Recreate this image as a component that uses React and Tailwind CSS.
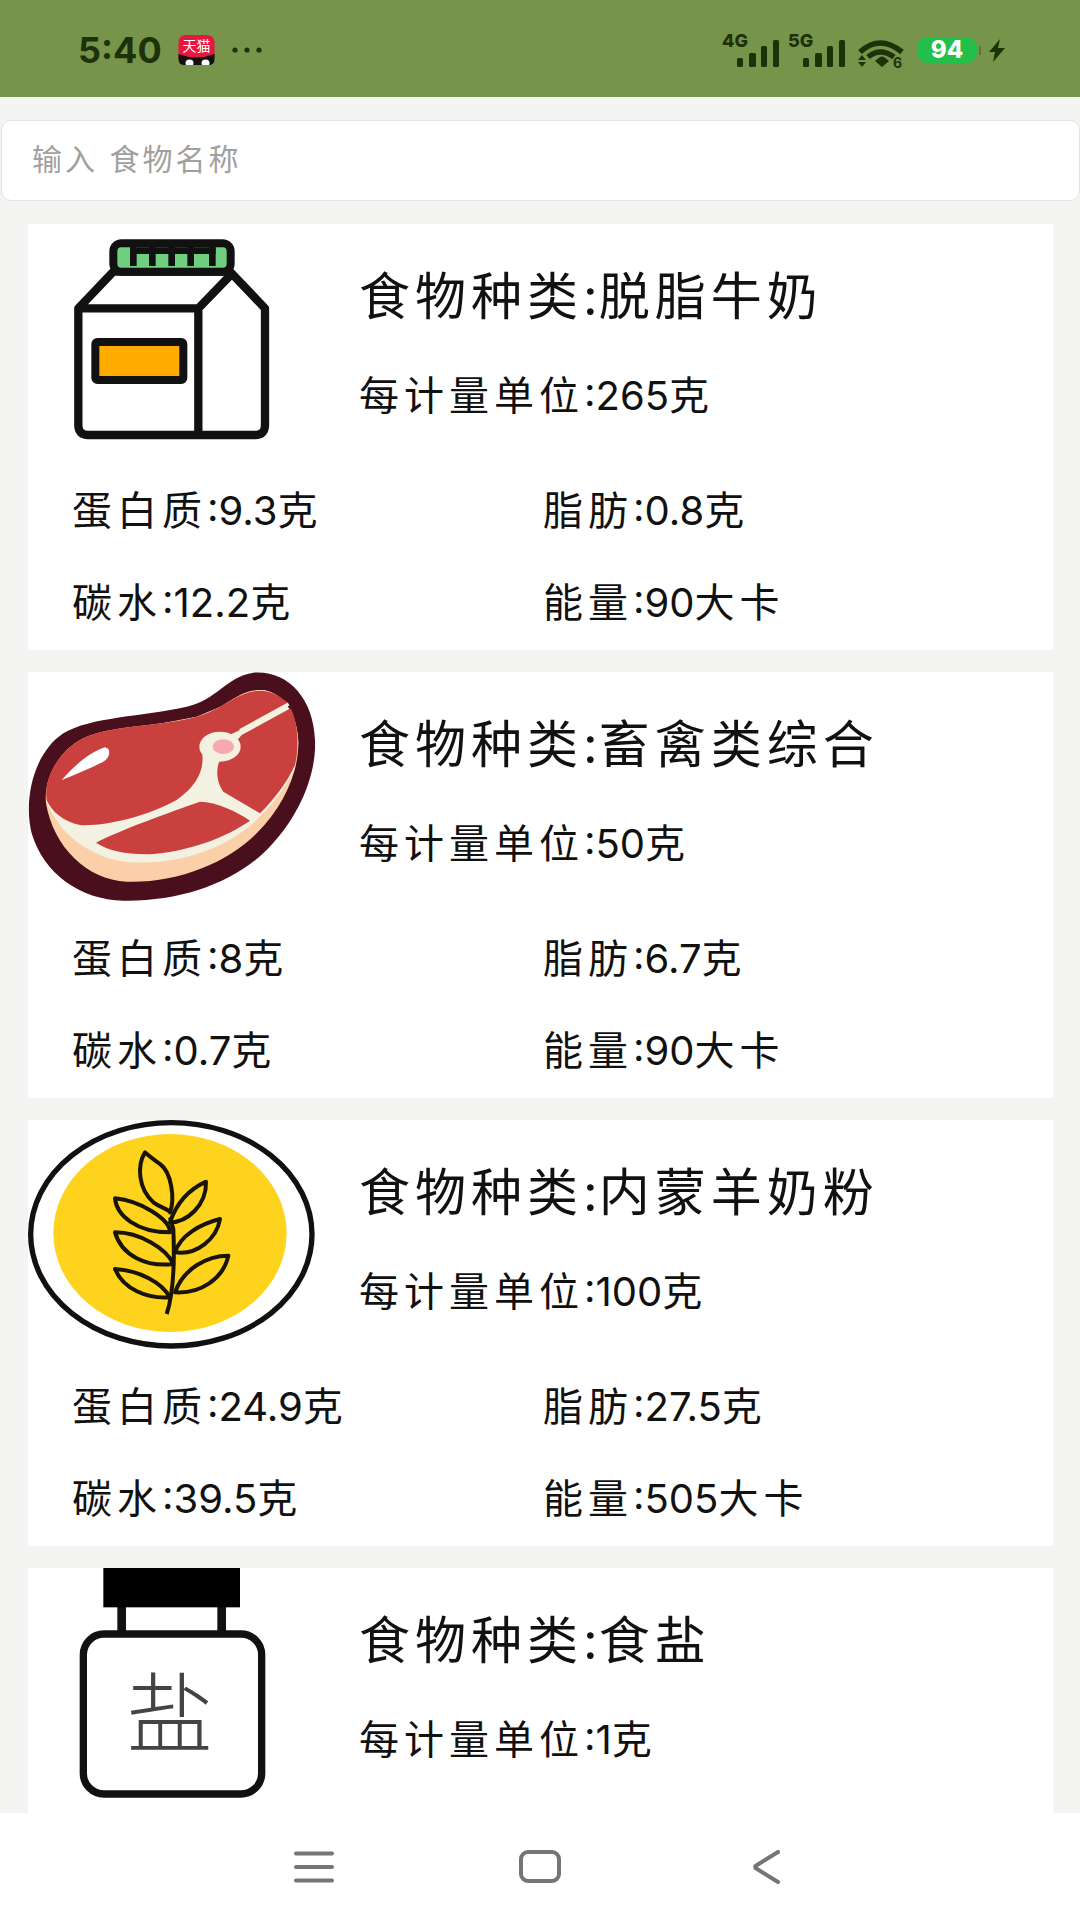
import React from 'react';

const foods = [
  { name: '脱脂牛奶', unit: '265', icon: 'milk', protein: '9.3', fat: '0.8', carbs: '12.2', energy: '90' },
  { name: '畜禽类综合', unit: '50', icon: 'meat', protein: '8', fat: '6.7', carbs: '0.7', energy: '90' },
  { name: '内蒙羊奶粉', unit: '100', icon: 'wheat', protein: '24.9', fat: '27.5', carbs: '39.5', energy: '505' },
  { name: '食盐', unit: '1', icon: 'salt' },
];

function MilkIcon() {
  return (
    <svg viewBox="24 12 861 690" className="w-full h-full">
      <path d="M280 155 L630 155 L735 265 L735 615 Q735 645 705 645 L205 645 Q175 645 175 615 L175 265 Z" fill="#fff" stroke="#111" strokeWidth="25" strokeLinejoin="round" />
      <path d="M175 265 L535 265 L535 645 M535 265 L632 165" fill="none" stroke="#111" strokeWidth="25" />
      <rect x="280" y="70" width="352" height="85" rx="24" fill="#6fcf7f" stroke="#111" strokeWidth="24" />
      <path d="M340 80 V138 M397 80 V138 M455 80 V138 M512 80 V138 M577 80 V138" stroke="#111" strokeWidth="20" />
      <path d="M332 92 H587" stroke="#111" strokeWidth="20" />
      <rect x="226" y="366" width="264" height="114" rx="6" fill="#ffab00" stroke="#111" strokeWidth="24" />
    </svg>
  );
}

function MeatIcon() {
  return (
    <svg viewBox="24 36 861 690" className="w-full h-full">
      <path d="M700 38 C800 30 880 110 885 240 C890 340 840 470 740 570 C640 670 480 725 310 722 C180 720 70 640 35 520 C10 420 40 280 130 220 C210 170 370 170 500 140 C590 120 620 50 700 38 Z" fill="#4a0f1c" />
      <path d="M720 90 C790 90 835 170 835 250 C835 340 790 440 710 520 C620 610 470 670 320 665 C200 660 100 560 78 430 C70 350 120 270 190 235 C270 195 420 200 530 170 C620 145 650 90 720 90 Z" fill="#fbd0a9" />
      <path d="M78 420 C110 510 190 580 300 603 C420 620 560 590 660 520 C730 470 790 400 825 325 L835 250 C835 170 790 90 720 90 L530 170 L190 235 Z" fill="#f3f1e2" />
      <path d="M80 420 C70 350 120 270 190 235 C270 195 420 200 530 170 C610 148 650 95 720 92 C755 92 785 110 805 130 L660 210 L545 265 C555 320 540 370 470 420 C380 470 250 500 180 495 C130 485 95 455 80 420 Z" fill="#c9403f" />
      <path d="M812 145 C835 190 838 260 825 315 C800 370 760 420 720 460 L610 395 C585 360 590 320 600 300 L665 225 Z" fill="#c9403f" />
      <path d="M228 548 C300 510 440 460 540 425 C590 425 650 455 690 482 C620 530 520 570 400 582 C330 585 270 575 228 548 Z" fill="#c9403f" />
      <path d="M660 212 L806 132" stroke="#f3f1e2" strokeWidth="10" />
      <ellipse cx="600" cy="260" rx="62" ry="45" fill="#f3f1e2" />
      <ellipse cx="610" cy="260" rx="32" ry="22" fill="#f7a8b0" />
      <path d="M125 360 C160 320 210 275 255 262 C275 265 270 295 250 305 C210 325 165 345 125 360 Z" fill="#fff" />
    </svg>
  );
}

function WheatIcon() {
  return (
    <svg viewBox="24 33 861 690" className="w-full h-full">
      <ellipse cx="454" cy="376" rx="422" ry="335" fill="#fff" stroke="#111" strokeWidth="16" />
      <ellipse cx="450" cy="372" rx="350" ry="297" fill="#fdd31e" />
      <g fill="none" stroke="#1a1408" strokeWidth="12" strokeLinejoin="round">
        <path d="M440 615 C455 570 465 480 460 360 L450 325" />
        <path d="M375 130 C350 170 355 240 400 280 C420 295 445 300 450 310 C465 270 455 190 420 165 C400 150 385 140 375 130 Z" />
        <path d="M558 218 C510 240 470 280 450 340 C500 340 560 290 558 218 Z" />
        <path d="M285 268 C290 320 350 370 450 370 C450 330 360 275 285 268 Z" />
        <path d="M600 330 C540 345 480 380 465 430 C530 440 590 390 600 330 Z" />
        <path d="M285 370 C305 440 380 475 460 465 C440 420 360 370 285 370 Z" />
        <path d="M625 440 C560 440 490 480 465 550 C540 555 610 510 625 440 Z" />
        <path d="M285 480 C310 540 380 570 450 565 C425 520 360 485 285 480 Z" />
      </g>
    </svg>
  );
}

function SaltIcon() {
  return (
    <svg viewBox="24 57 861 690" className="w-full h-full">
      <path d="M305 170 V255 M605 170 V255" stroke="#111" strokeWidth="26" />
      <rect x="250" y="57" width="410" height="118" fill="#000" />
      <rect x="190" y="255" width="535" height="480" rx="62" fill="#fff" stroke="#111" strokeWidth="22" />
      <text x="450" y="590" textAnchor="middle" fontSize="262" fontWeight="300" fill="#444" fontFamily="'Noto Sans CJK SC', sans-serif">盐</text>
    </svg>
  );
}

const icons = { milk: MilkIcon, meat: MeatIcon, wheat: WheatIcon, salt: SaltIcon };

function Nutrient({ label, value, unit }) {
  return (
    <div className="flex items-center h-[92px] text-[40px]">
      <span className="tracking-[5px]">{label}</span>
      <span>:{value}</span>
      <span className="tracking-[5px]">{unit}</span>
    </div>
  );
}

function FoodCard({ food }) {
  const Icon = icons[food.icon];
  return (
    <div className="h-[426px] shrink-0 bg-white text-[#111]">
      <div className="flex h-[241px]">
        <div className="w-[287px] h-[230px] shrink-0">
          <Icon />
        </div>
        <div className="pl-[44px] pt-[23px]">
          <div className="flex items-center h-[100px] text-[51px]">
            <span className="tracking-[5px]">食物种类</span>
            <span className="tracking-[1px]">:</span>
            <span className="tracking-[5px]">{food.name}</span>
          </div>
          <div className="flex items-center h-[98px] text-[40px]">
            <span className="tracking-[5px]">每计量单位</span>
            <span>:{food.unit}</span>
            <span>克</span>
          </div>
        </div>
      </div>
      {food.protein && (
        <div className="grid grid-cols-[471px_1fr] pl-[44px]">
          <Nutrient label="蛋白质" value={food.protein} unit="克" />
          <Nutrient label="脂肪" value={food.fat} unit="克" />
          <Nutrient label="碳水" value={food.carbs} unit="克" />
          <Nutrient label="能量" value={food.energy} unit="大卡" />
        </div>
      )}
    </div>
  );
}

function StatusBar() {
  return (
    <div className="h-[97px] shrink-0 bg-[#76954a] flex items-center justify-between pl-[78px] pr-[75px] pt-[3px] text-[#1e3209]">
      <div className="flex items-center">
        <span className="text-[36px] font-bold leading-none">5:40</span>
        <svg viewBox="0 0 36 30" className="w-[37px] h-[30px] ml-[16px]">
          <path d="M8 0 H28 Q36 0 36 8 V22 Q36 30 28 30 H8 Q0 30 0 22 V8 Q0 0 8 0 Z" fill="#e8173f" />
          <path d="M0 19 Q18 26 36 19 V24 Q36 30 30 30 H6 Q0 30 0 24 Z" fill="#111" />
          <ellipse cx="11" cy="28" rx="4" ry="3.5" fill="#fff" />
          <ellipse cx="27" cy="28" rx="4" ry="3.5" fill="#fff" />
          <text x="18" y="16" textAnchor="middle" fontSize="14" fill="#fff" fontFamily="'Noto Sans CJK SC', sans-serif">天猫</text>
        </svg>
        <svg viewBox="0 0 30 6" className="w-[30px] h-[6px] ml-[17px]">
          <circle cx="3" cy="3" r="2.6" fill="#1e3209" />
          <circle cx="15" cy="3" r="2.6" fill="#1e3209" />
          <circle cx="27" cy="3" r="2.6" fill="#1e3209" />
        </svg>
      </div>
      <div className="flex items-center">
        <svg viewBox="0 0 190 40" className="w-[190px] h-[40px]" fill="#1e3209">
          <text x="0" y="17" fontSize="18" fontWeight="800" fontFamily="Inter, sans-serif">4G</text>
          <rect x="15" y="28" width="6" height="9" rx="1.5" />
          <rect x="27" y="23" width="7" height="14" rx="1.5" />
          <rect x="39" y="16" width="6" height="21" rx="1.5" />
          <rect x="51" y="10" width="6" height="27" rx="1.5" />
          <text x="66" y="17" fontSize="18" fontWeight="800" fontFamily="Inter, sans-serif">5G</text>
          <rect x="81" y="28" width="6" height="9" rx="1.5" />
          <rect x="93" y="23" width="7" height="14" rx="1.5" />
          <rect x="105" y="16" width="6" height="21" rx="1.5" />
          <rect x="117" y="10" width="6" height="27" rx="1.5" />
          <path d="M138 22 Q158 4 180 22" fill="none" stroke="#1e3209" strokeWidth="5.5" />
          <path d="M146 27 Q158 17 172 27" fill="none" stroke="#1e3209" strokeWidth="5.5" />
          <path d="M153 31 L158 27 Q160 26 162 27 L167 31 L160 37 Z" />
          <path d="M136 30 L140 25 L144 30 Z M136 32 L144 32 L140 37 Z" />
          <text x="171" y="38" fontSize="14" fontWeight="700" fontFamily="Inter, sans-serif">6</text>
        </svg>
        <div className="ml-[5px] w-[60px] h-[26px] rounded-[11px] bg-[#22c04a] flex items-center justify-center text-white text-[24px] font-extrabold leading-none">94</div>
        <div className="w-[2px] h-[9px] ml-[2px] bg-[#4f7a3c]" />
        <svg viewBox="0 0 16 23" className="w-[16px] h-[23px] ml-[8px]" fill="#1e3209">
          <path d="M11 0 L0 13 L6 13 L4 23 L16 9 L9 9 Z" />
        </svg>
      </div>
    </div>
  );
}

function NavBar() {
  return (
    <div className="h-[107px] shrink-0 bg-white flex items-center pl-[294px]">
      <svg viewBox="0 0 40 32" className="w-[40px] h-[32px]" stroke="#757575" strokeWidth="4" strokeLinecap="round">
        <path d="M2 2.5 H38 M2 16 H38 M2 29.5 H38" />
      </svg>
      <svg viewBox="0 0 42 33" className="w-[42px] h-[33px] ml-[185px]" fill="none" stroke="#757575" strokeWidth="4">
        <rect x="2" y="2" width="38" height="29" rx="7" />
      </svg>
      <svg viewBox="0 0 27 34" className="w-[27px] h-[34px] ml-[192px]" fill="none" stroke="#757575" strokeWidth="4" strokeLinecap="round" strokeLinejoin="round">
        <path d="M25 2 L2.5 16 Q2 17 2.5 18 L25 32" />
      </svg>
    </div>
  );
}

export default function App() {
  return (
    <div className="w-[1080px] h-[1920px] flex flex-col overflow-hidden bg-[#f4f4f2] font-['Inter','Noto_Sans_CJK_SC',sans-serif]">
      <StatusBar />
      <div className="mt-[23px] ml-[1px] h-[81px] shrink-0 flex items-center pl-[30px] pb-[2px] bg-white border border-[#e3e3e1] rounded-[10px] text-[30px] tracking-[3px] text-[#a0a0a0]">
        输入 食物名称
      </div>
      <div className="flex-1 overflow-hidden flex flex-col gap-[22px] mt-[23px] mx-[28px] w-[1025px]">
        {foods.map((food) => (
          <FoodCard key={food.name} food={food} />
        ))}
      </div>
      <NavBar />
    </div>
  );
}
